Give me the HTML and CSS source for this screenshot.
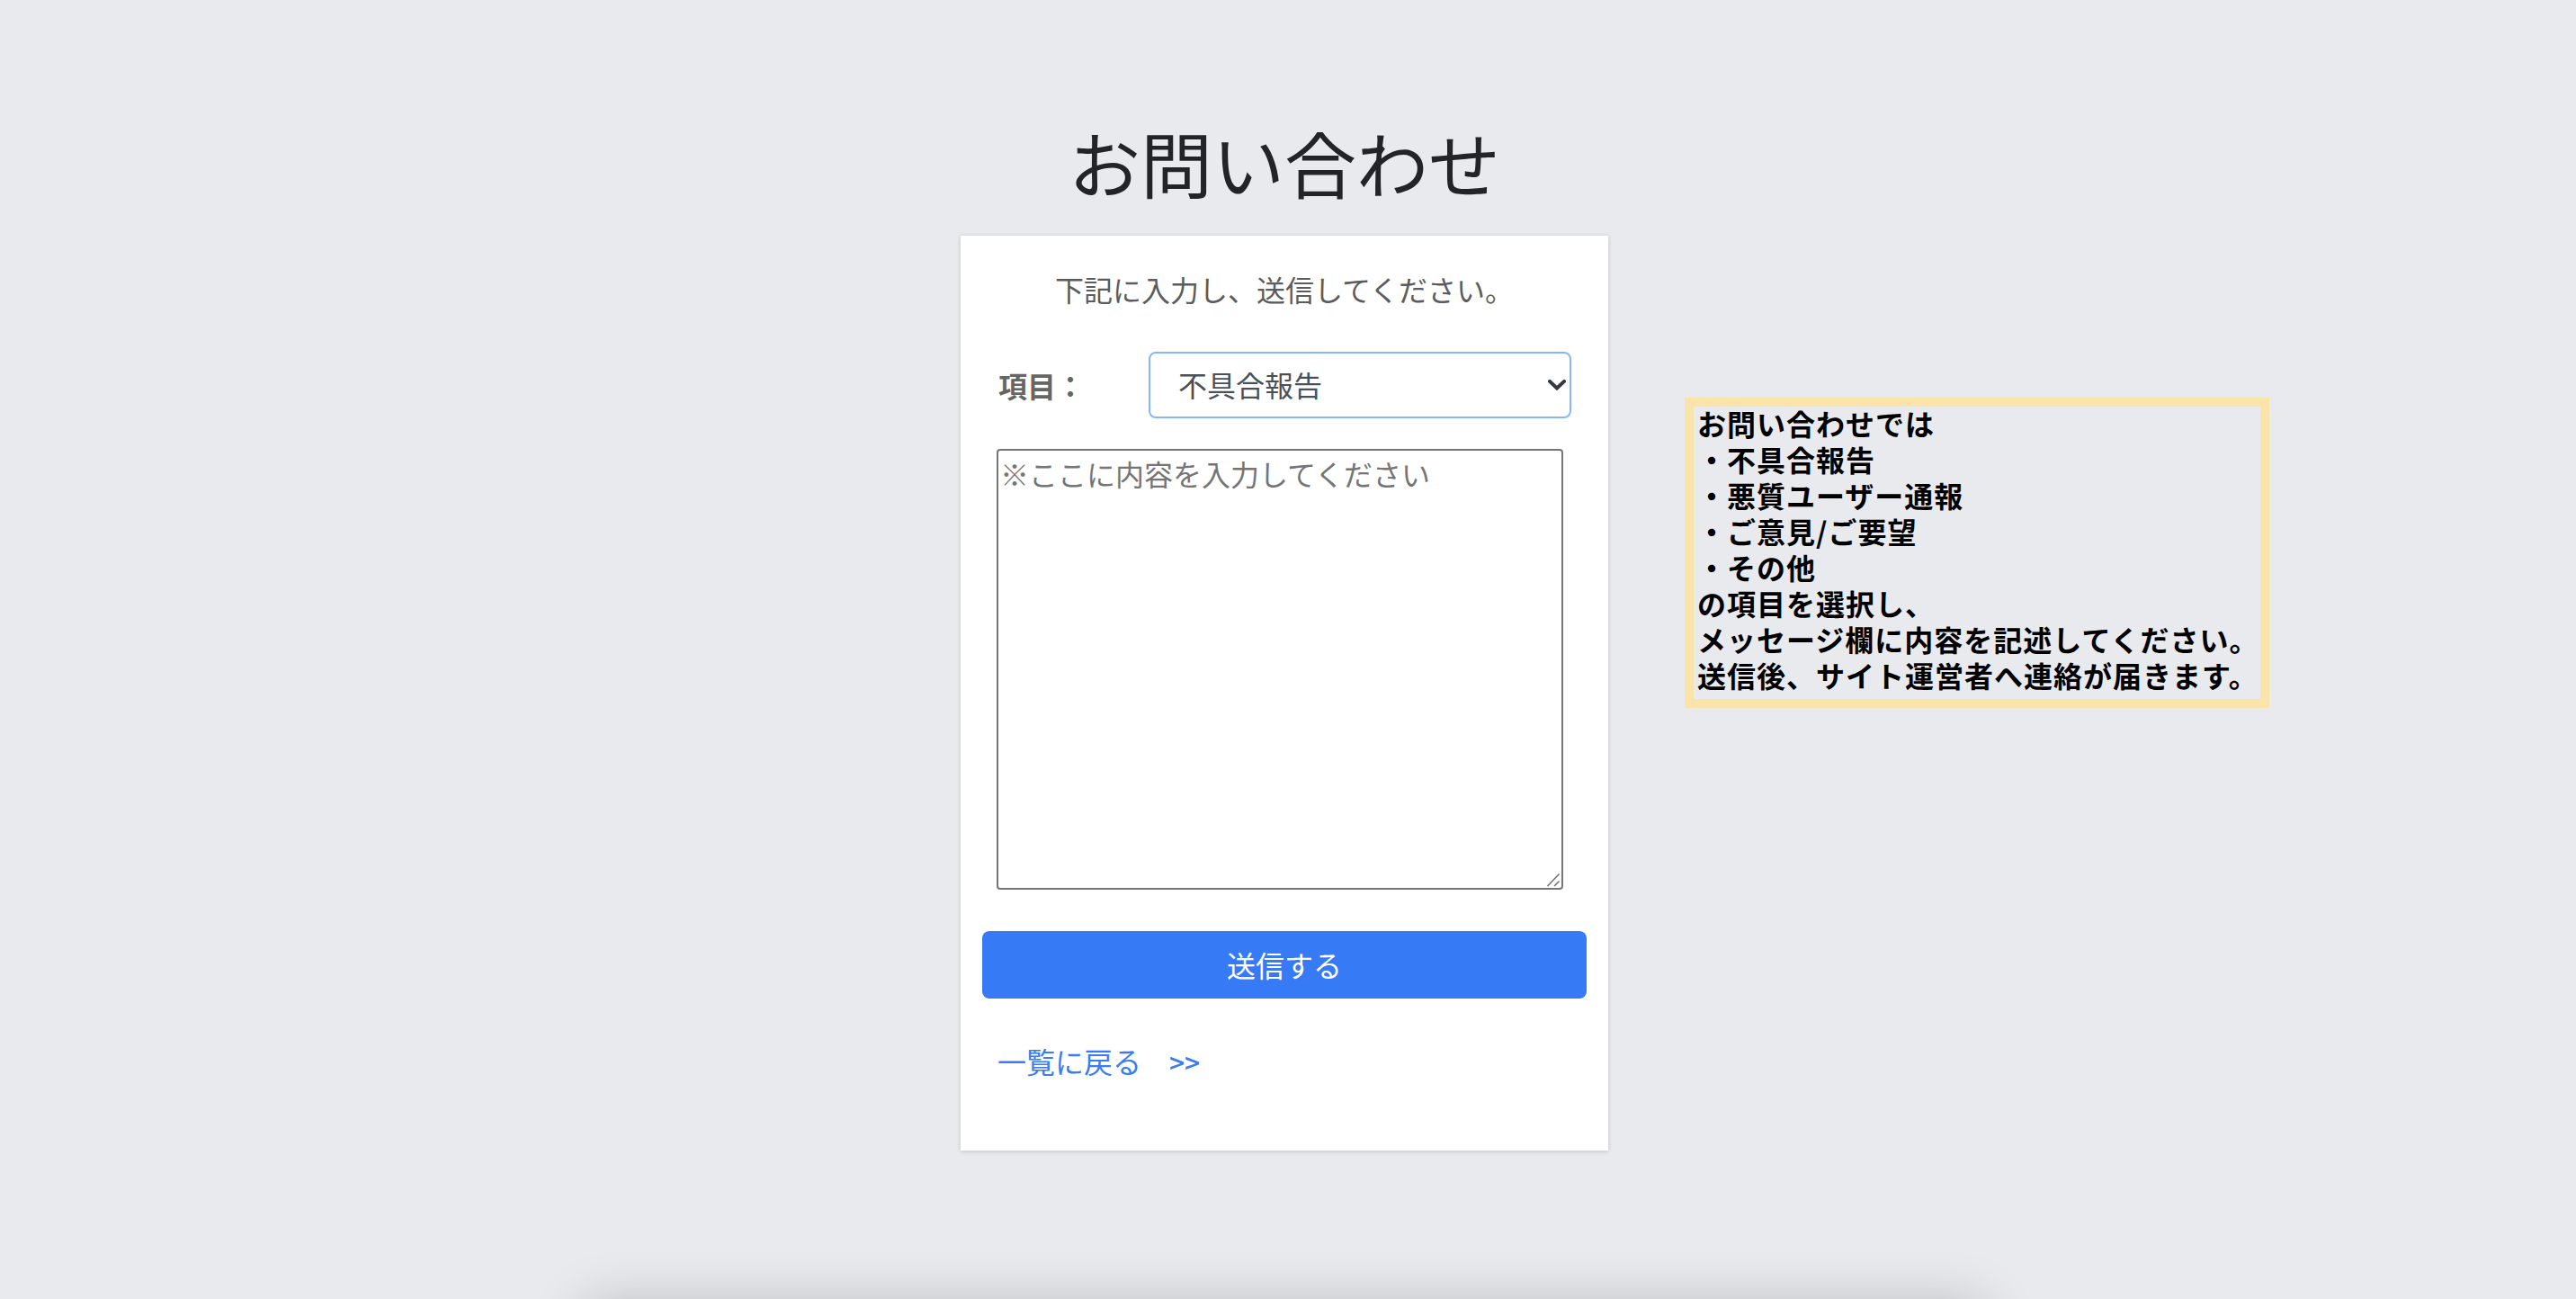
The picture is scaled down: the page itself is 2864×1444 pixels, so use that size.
FILE: index.html
```html
<!DOCTYPE html>
<html lang="ja">
<head>
<meta charset="utf-8">
<title>お問い合わせ</title>
<link rel="stylesheet" href="styles.css">
</head>
<body>
<div class="page">
  <div class="layout">
    <h1 class="title">お問い合わせ</h1>
    <div class="card">
      <p class="lead">下記に入力し、送信してください。</p>
      <div class="form-row">
        <label class="label" for="kind">項目：</label>
        <div class="select-wrap">
          <select id="kind" class="select">
            <option>不具合報告</option>
            <option>悪質ユーザー通報</option>
            <option>ご意見/ご要望</option>
            <option>その他</option>
          </select>
          <svg class="chevron" width="20" height="12" viewBox="0 0 20 12"><path d="M2 2 L10 9.5 L18 2" fill="none" stroke="#343a40" stroke-width="4" stroke-linecap="square"/></svg>
        </div>
      </div>
      <div class="area-wrap">
        <textarea class="area" placeholder="※ここに内容を入力してください"></textarea>
        <svg class="grip" width="16" height="16" viewBox="0 0 16 16"><path d="M1.5 15 L14.5 1.5 M9 15 L14.5 9.5" stroke="#6f6f6f" stroke-width="1.5"/></svg>
      </div>
      <button class="submit" type="button">送信する</button>
      <a class="back" href="#">一覧に戻る<span class="arrows">&gt;&gt;</span></a>
    </div>
    <div class="note"><div class="note-text">お問い合わせでは<br>・不具合報告<br>・悪質ユーザー通報<br>・ご意見/ご要望<br>・その他<br>の項目を選択し、<br>メッセージ欄に内容を記述してください。<br>送信後、サイト運営者へ連絡が届きます。</div></div>
  </div>
  <div class="footer-shade"></div>
</div>
</body>
</html>
```
FILE: styles.css
```css
html, body {
  margin: 0;
  padding: 0;
  height: 100%;
  overflow: hidden;
  background: #e9eaee;
}
body {
  font-family: "Noto Sans CJK JP", "Noto Sans", sans-serif;
  color: #212529;
}
.page {
  height: 1444px;
  overflow: hidden;
  display: flex;
  flex-direction: column;
  align-items: center;
  padding-right: 8px;
  box-sizing: border-box;
}
.layout {
  width: 100%;
  display: grid;
  grid-template-columns: 1fr 720px 1fr;
  grid-template-rows: auto auto;
  padding-top: 131px;
}
.title {
  grid-column: 2;
  grid-row: 1;
  margin: 0 0 35px;
  font-size: 80px;
  line-height: 96px;
  font-weight: 400;
  text-align: center;
  color: #212529;
}
.card {
  grid-column: 2;
  grid-row: 2;
  background: #fff;
  box-shadow: 0 1px 5px rgba(0,0,0,0.18);
  padding: 35px 24px 75px;
  display: flex;
  flex-direction: column;
}
.lead {
  margin: 0;
  font-size: 32px;
  line-height: 48px;
  text-align: center;
  color: #5c5c5c;
}
.form-row {
  margin-top: 46px;
  padding: 0 16px;
  display: flex;
  align-items: center;
}
.label {
  width: 169px;
  flex: none;
  font-size: 32px;
  font-weight: 700;
  color: #666;
  padding-left: 2px;
  box-sizing: border-box;
}
.select-wrap {
  position: relative;
  flex: 1;
}
.select {
  appearance: none;
  -webkit-appearance: none;
  width: 470px;
  height: 74px;
  box-sizing: border-box;
  border: 2px solid #86b7fe;
  border-radius: 8px;
  background: #fff;
  font-family: inherit;
  font-size: 32px;
  color: #495057;
  padding: 0 60px 2px 31px;
  outline: none;
}
.chevron {
  position: absolute;
  right: 7px;
  top: 31px;
}
.area-wrap {
  position: relative;
  margin: 34px 16px 0;
  width: 630px;
  height: 490px;
}
.area {
  display: block;
  width: 630px;
  height: 490px;
  box-sizing: border-box;
  border: 2px solid #767676;
  border-radius: 4px;
  padding: 3px 2px;
  font-family: inherit;
  font-size: 32px;
  line-height: 44px;
  resize: none;
  outline: none;
  background: #fff;
}
.area::placeholder {
  color: #757575;
}
.grip {
  position: absolute;
  right: 3px;
  bottom: 3px;
}
.submit {
  margin-top: 46px;
  height: 75px;
  width: 100%;
  border: none;
  border-radius: 8px;
  background: #367af6;
  color: #fff;
  font-family: inherit;
  font-size: 32px;
  line-height: 71px;
}
.back {
  margin-top: 45px;
  padding-left: 17px;
  font-size: 32px;
  line-height: 48px;
  color: #3a7cf2;
  text-decoration: none;
}
.arrows {
  margin-left: 31px;
  font-size: 30px;
  font-weight: 500;
}
.note {
  grid-column: 3;
  grid-row: 2;
  justify-self: start;
  align-self: start;
  margin-left: 85px;
  margin-top: 180px;
  width: 650px;
  height: 345px;
  box-sizing: border-box;
  border: 10px solid #fbe4aa;
  padding: 0 2px 0 4px;
  overflow: hidden;
}
.note-text {
  margin-top: -2px;
  font-size: 32px;
  line-height: 40px;
  font-weight: 700;
  letter-spacing: 1px;
  color: #000;
  white-space: nowrap;
}
.footer-shade {
  flex: none;
  margin-top: 172px;
  width: 1560px;
  height: 200px;
  border-radius: 20px;
  background: #e9eaee;
  box-shadow: 0 0 60px rgba(0,0,0,0.22);
}
```
